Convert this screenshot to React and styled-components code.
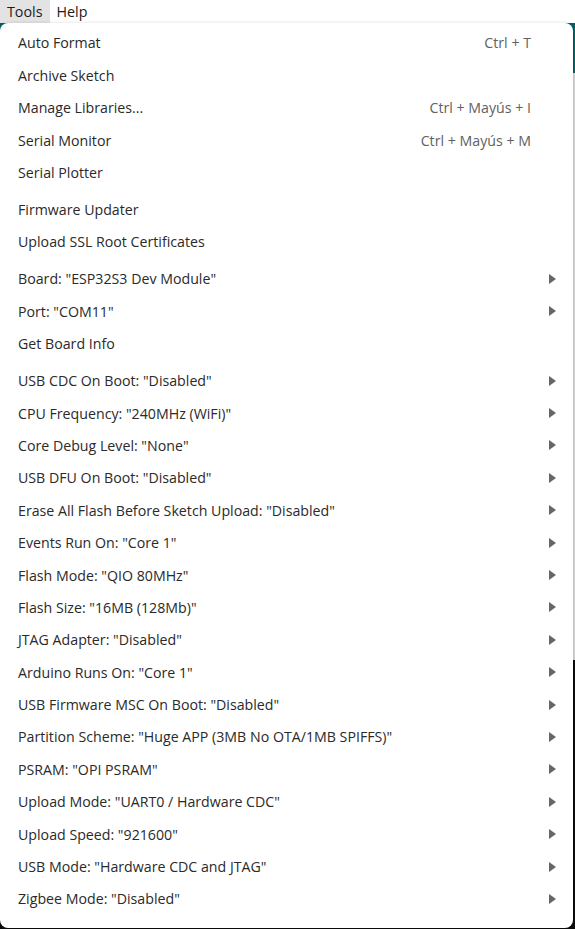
import React from "react";
import styled, { createGlobalStyle } from "styled-components";

const Global = createGlobalStyle`
  html, body { margin: 0; padding: 0; background: #ffffff; }
  body { width: 575px; height: 929px; overflow: hidden; font-family: "Open Sans", "Noto Sans", sans-serif; }
  #root { width: 575px; height: 929px; }
`;

const Page = styled.div`
  position: relative;
  width: 575px;
  height: 929px;
  display: flex;
  flex-direction: column;
  overflow: hidden;
`;

const MenuBar = styled.div`
  height: 23px;
  display: flex;
  align-items: stretch;
  background: #ffffff;
  box-shadow: 0 1px 2px rgba(0,0,0,0.08);
  position: relative;
  z-index: 1;
`;

const MenuTitle = styled.div`
  display: flex;
  align-items: center;
  padding: 0 7px 0 7px;
  font-size: 14.3px;
  color: #1b1b1b;
  background: ${(p) => (p.$active ? "#e3e3e3" : "transparent")};
`;

const Ide = styled.div`
  flex: 1;
  display: flex;
  flex-direction: column;
`;

const Toolbar = styled.div`
  height: 50px;
  background: #006468;
`;

const Sidebar = styled.div`
  height: 587px;
  background: #dadada;
`;

const Editor = styled.div`
  flex: 1;
  background: #0c0c0c;
`;

const Dropdown = styled.div`
  position: absolute;
  top: 23px;
  left: 0;
  width: 573px;
  height: 905px;
  box-sizing: border-box;
  background: #ffffff;
  border-radius: 8px;
  box-shadow: 0 1px 4px rgba(0,0,0,0.22);
  padding-top: 3.8px;
  display: flex;
  flex-direction: column;
  z-index: 2;
`;

const Item = styled.div`
  height: 32.4px;
  flex: none;
  display: grid;
  grid-template-columns: 1fr auto 42px;
  align-items: center;
  padding-left: 18px;
  font-size: 14.2px;
  color: #2a2a2a;
  white-space: nowrap;
`;

const Shortcut = styled.span`
  color: #616161;
`;

const Arrow = styled.span`
  justify-self: start;
  margin-left: 18px;
  width: 0;
  height: 0;
  border-top: 5px solid transparent;
  border-bottom: 5px solid transparent;
  border-left: 7.5px solid #666666;
`;

const Separator = styled.div`
  height: 4.6px;
  flex: none;
`;

const groups = [
  [
    { label: "Auto Format", shortcut: "Ctrl + T" },
    { label: "Archive Sketch" },
    { label: "Manage Libraries...", shortcut: "Ctrl + Mayús + I" },
    { label: "Serial Monitor", shortcut: "Ctrl + Mayús + M" },
    { label: "Serial Plotter" },
  ],
  [{ label: "Firmware Updater" }, { label: "Upload SSL Root Certificates" }],
  [
    { label: 'Board: "ESP32S3 Dev Module"', sub: true },
    { label: 'Port: "COM11"', sub: true },
    { label: "Get Board Info" },
  ],
  [
    { label: 'USB CDC On Boot: "Disabled"', sub: true },
    { label: 'CPU Frequency: "240MHz (WiFi)"', sub: true },
    { label: 'Core Debug Level: "None"', sub: true },
    { label: 'USB DFU On Boot: "Disabled"', sub: true },
    { label: 'Erase All Flash Before Sketch Upload: "Disabled"', sub: true },
    { label: 'Events Run On: "Core 1"', sub: true },
    { label: 'Flash Mode: "QIO 80MHz"', sub: true },
    { label: 'Flash Size: "16MB (128Mb)"', sub: true },
    { label: 'JTAG Adapter: "Disabled"', sub: true },
    { label: 'Arduino Runs On: "Core 1"', sub: true },
    { label: 'USB Firmware MSC On Boot: "Disabled"', sub: true },
    { label: 'Partition Scheme: "Huge APP (3MB No OTA/1MB SPIFFS)"', sub: true },
    { label: 'PSRAM: "OPI PSRAM"', sub: true },
    { label: 'Upload Mode: "UART0 / Hardware CDC"', sub: true },
    { label: 'Upload Speed: "921600"', sub: true },
    { label: 'USB Mode: "Hardware CDC and JTAG"', sub: true },
    { label: 'Zigbee Mode: "Disabled"', sub: true },
  ],
];

export default function App() {
  return (
    <>
      <Global />
      <Page>
        <MenuBar>
          <MenuTitle $active>Tools</MenuTitle>
          <MenuTitle>Help</MenuTitle>
        </MenuBar>
        <Ide>
          <Toolbar />
          <Sidebar />
          <Editor />
        </Ide>
        <Dropdown>
          {groups.map((g, gi) => (
            <React.Fragment key={gi}>
              {gi > 0 && <Separator />}
              {g.map((it) => (
                <Item key={it.label}>
                  <span>{it.label}</span>
                  {it.shortcut ? <Shortcut>{it.shortcut}</Shortcut> : <span />}
                  {it.sub ? <Arrow /> : <span />}
                </Item>
              ))}
            </React.Fragment>
          ))}
        </Dropdown>
      </Page>
    </>
  );
}
